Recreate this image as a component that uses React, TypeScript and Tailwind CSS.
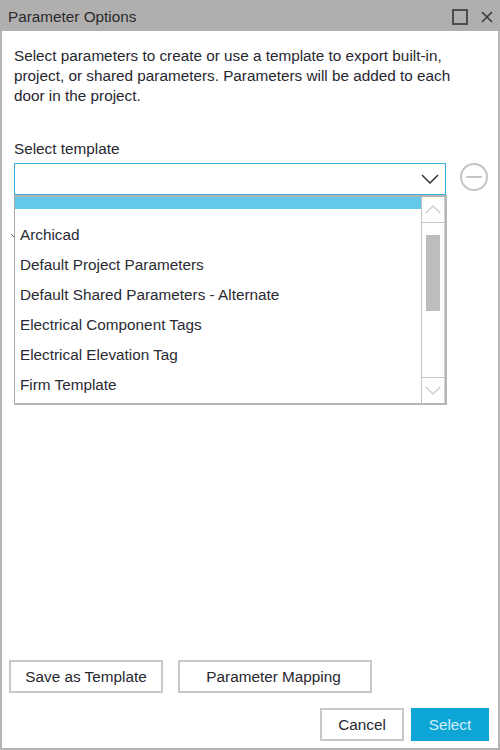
import { Minus } from "lucide-react";

const templates = [
  "Archicad",
  "Default Project Parameters",
  "Default Shared Parameters - Alternate",
  "Electrical Component Tags",
  "Electrical Elevation Tag",
  "Firm Template",
];

function Chevron({ up, className }: { up?: boolean; className: string }) {
  return (
    <svg viewBox="0 0 18 10" className={className} fill="none" stroke="currentColor" strokeWidth="1.5">
      <path d={up ? "M1 9 9 1l8 8" : "M1 1l8 8 8-8"} />
    </svg>
  );
}

export default function App() {
  return (
    <div className="w-[500px] h-[750px] flex flex-col bg-white text-[15.3px] text-[#27272f] font-['Liberation_Sans',Arial,sans-serif]">
      {/* Title bar */}
      <div className="h-[31px] shrink-0 bg-[#b0afad] flex items-center pt-[3px] pl-[8px] pr-[7px]">
        <span className="flex-1 text-[#2a2a2e]">Parameter Options</span>
        <span className="w-[16px] h-[16px] border-2 border-[#4e4e4e] mr-[13px]" />
        <svg viewBox="0 0 12 12" className="w-[12px] h-[12px] text-[#3a3a3a]" fill="none" stroke="currentColor" strokeWidth="1.6">
          <path d="M1 1l10 10M11 1 1 11" />
        </svg>
      </div>

      {/* Body */}
      <div className="flex-1 flex flex-col border-x-2 border-b-2 border-[#b5b5b5] pl-[12px] pr-[9px] pb-[7px]">
        <p className="mt-[15px] w-[450px] leading-[20px]">
          Select parameters to create or use a template to export built-in, project, or shared parameters. Parameters will be added to each door in the project.
        </p>
        <label className="mt-[33px] leading-[20px]">Select template</label>

        <div className="relative mt-[4px] flex items-start gap-[14px]">
          <div className="w-[432px] h-[32px] border border-[#35b0d8] flex items-center justify-end pr-[6px]">
            <Chevron className="w-[18px] h-[10px] text-[#333333]" />
          </div>
          <div className="w-[28px] h-[28px] rounded-full border-2 border-[#c4c4c4] flex items-center justify-center text-[#c4c4c4]">
            <Minus size={24} strokeWidth={2} />
          </div>

          {/* Sliver of the control covered by the open list */}
          <svg viewBox="0 0 5 5" className="absolute left-[-3px] top-[71px] w-[5px] h-[5px] text-[#555555]" fill="none" stroke="currentColor" strokeWidth="1">
            <path d="M0 0l4 4" />
          </svg>

          {/* Open list */}
          <div className="absolute left-0 top-[32px] w-[433px] h-[210px] flex border-l border-[#a8a8a8] border-t-2 border-t-[#b5b5b5] border-r-2 border-r-[#b5b5b5] border-b-2 border-b-[#b5b5b5] bg-white">
            <div className="flex-1 min-w-0">
              <div className="h-[12px] bg-[#64c8e9]" />
              <ul className="pt-[11px]">
                {templates.map((name) => (
                  <li key={name} className="h-[30px] pl-[5px] leading-[30px] text-[#2a2a33]">{name}</li>
                ))}
              </ul>
            </div>
            <div className="w-[24px] shrink-0 flex flex-col border-l border-[#c4c4c4] border-r border-r-[#d0d0d0]">
              <div className="h-[26px] border-b border-[#c4c4c4] flex items-center justify-center text-[#cccccc]">
                <Chevron up className="w-[16px] h-[9px]" />
              </div>
              <div className="flex-1 px-[4px] pt-[12px]">
                <div className="h-[76px] bg-[#bdbdbd]" />
              </div>
              <div className="h-[26px] border-t border-[#c4c4c4] flex items-center justify-center text-[#cccccc]">
                <Chevron className="w-[16px] h-[9px]" />
              </div>
            </div>
          </div>
        </div>

        {/* Footer buttons */}
        <div className="mt-auto flex gap-[15px] -ml-[5px]">
          <button className="w-[154px] h-[33px] pt-[1px] border-2 border-[#c8c8c8]">Save as Template</button>
          <button className="w-[194px] h-[33px] pt-[1px] pr-[3px] border-2 border-[#c8c8c8]">Parameter Mapping</button>
        </div>
        <div className="mt-[15px] flex justify-end gap-[7px]">
          <button className="w-[84px] h-[33px] pt-[1px] border-2 border-[#c8c8c8]">Cancel</button>
          <button className="w-[78px] h-[33px] pt-[1px] bg-[#0da5d6] text-[#d5eef7]">Select</button>
        </div>
      </div>
    </div>
  );
}
